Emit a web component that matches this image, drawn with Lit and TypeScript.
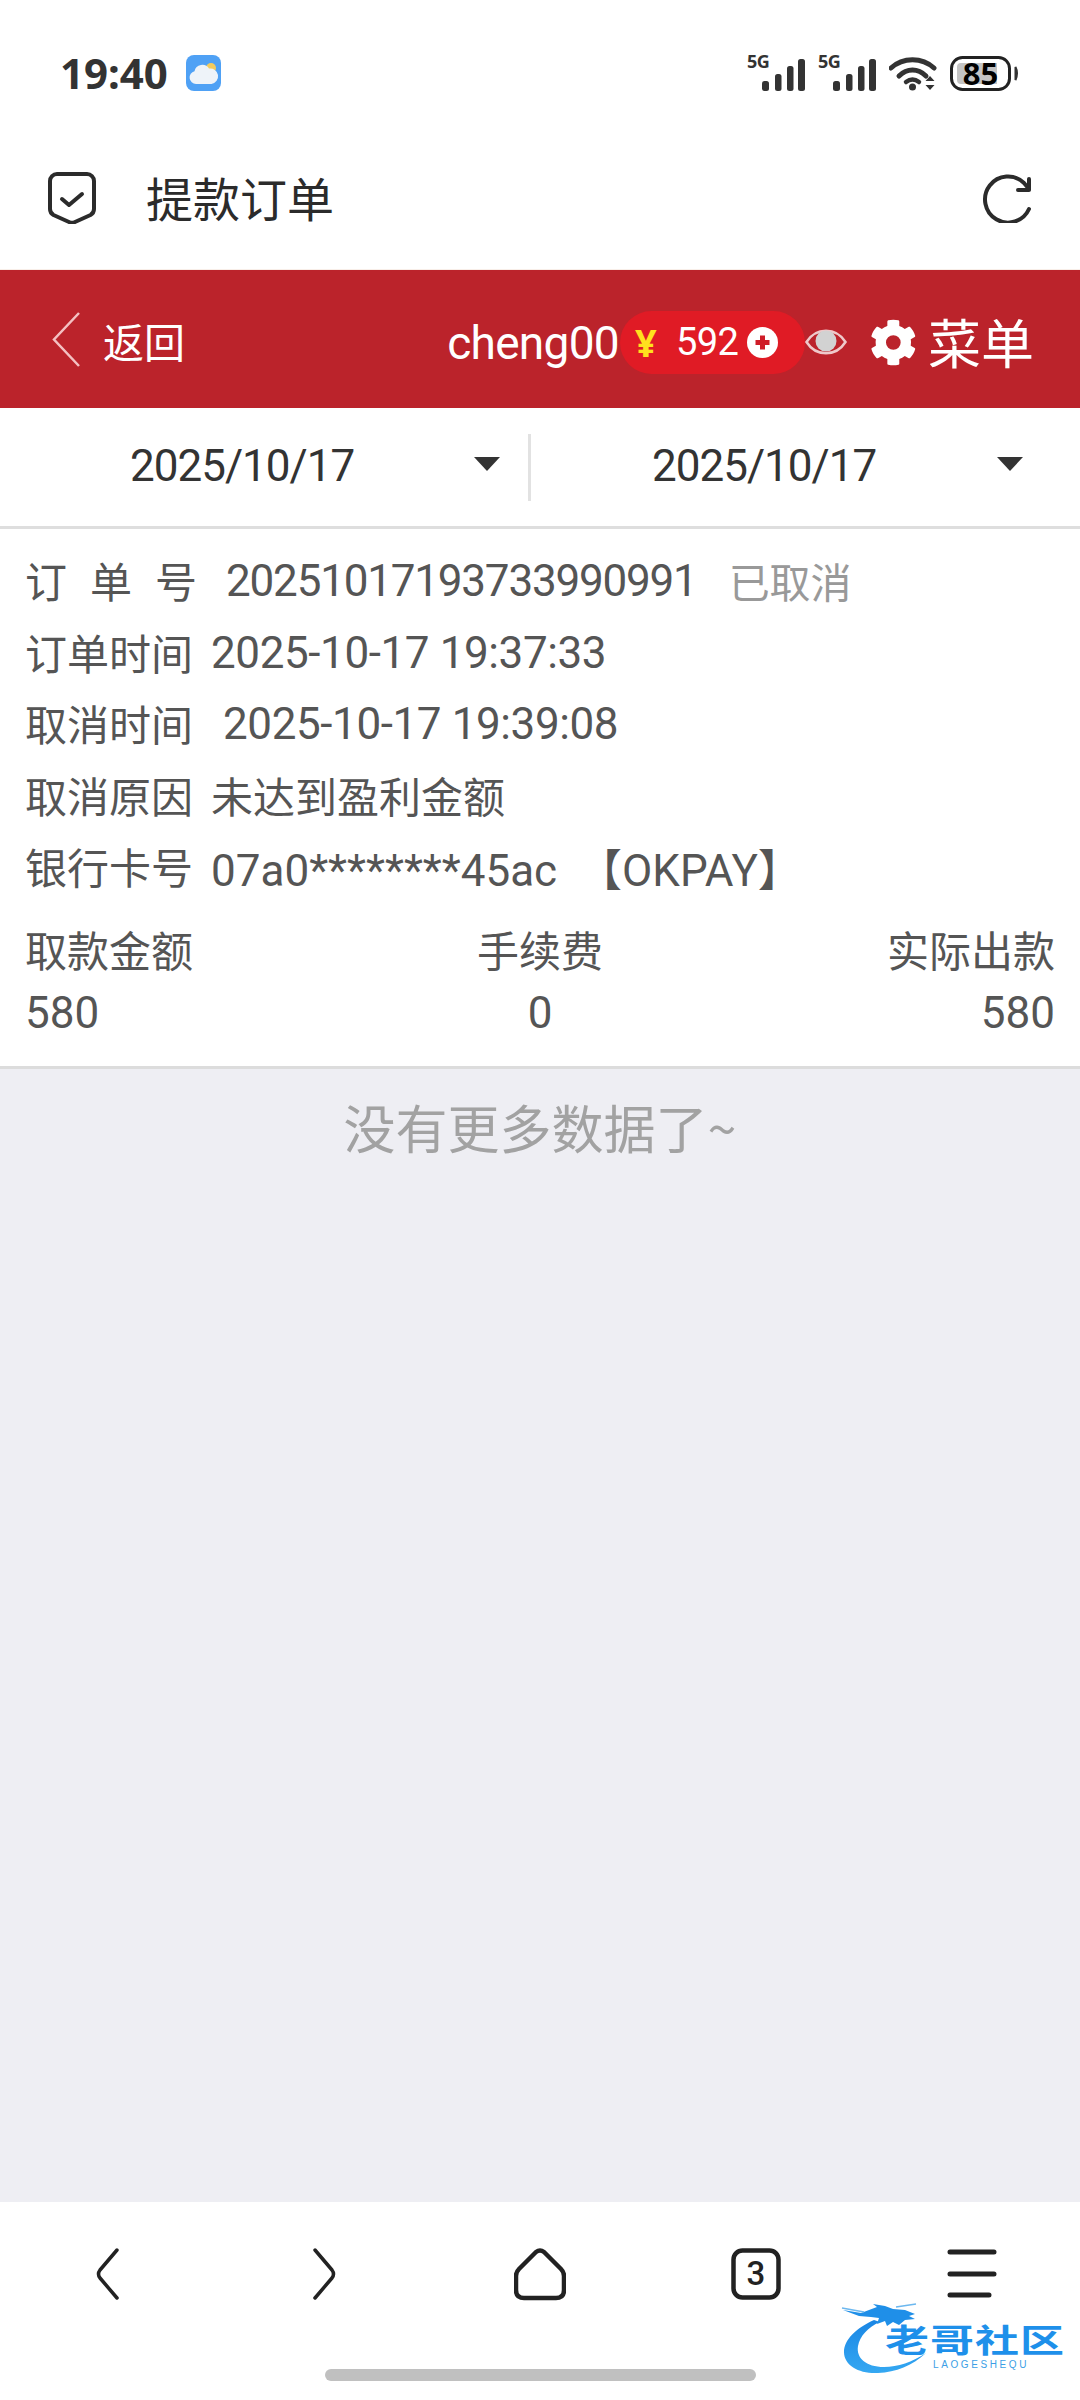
import { LitElement, html, css, svg } from "lit";
import { customElement } from "lit/decorators.js";

const signal = html`<svg class="sig" width="58" height="38" viewBox="0 0 58 38">
  <text x="0" y="14" class="five">5G</text>
  <g fill="#333">
    <rect x="15" y="27" width="7" height="10" rx="2.5"/>
    <rect x="28" y="20" width="6.5" height="17" rx="2.5"/>
    <rect x="40" y="12" width="6.5" height="25" rx="2.5"/>
    <rect x="51" y="5" width="7" height="32" rx="2.5"/>
  </g></svg>`;

@customElement("app-root")
export class AppRoot extends LitElement {
  static styles = css`
    :host { display: flex; flex-direction: column; width: 1080px; height: 2400px; position: relative; overflow: hidden;
      background: #fff; font-family: Roboto, "Noto Sans CJK SC", sans-serif; color: #555; }
    svg { display: block; flex: none; }
    .status { height: 126px; box-sizing: border-box; padding: 54px 61px 0 60px; display: flex; align-items: flex-start; justify-content: space-between; flex: none; }
    .status-left { display: flex; align-items: center; gap: 18px; height: 38px; }
    .time { font: 700 42px/38px "Noto Sans", "Open Sans", sans-serif; color: #333; }
    .status-right { display: flex; align-items: center; gap: 13px; height: 38px; }
    .sig { overflow: visible; }
    .five { font: 700 18px "Noto Sans", sans-serif; fill: #333; letter-spacing: -0.5px; }
    .batt { position: relative; width: 69px; height: 35px; }
    .batt-num { position: absolute; left: 0; width: 61px; top: 0; text-align: center; font: 700 31px/35px "Noto Sans", sans-serif; color: #000; }
    .titlebar { height: 144px; box-sizing: border-box; padding: 0 48px; display: flex; align-items: center; flex: none; border-bottom: 1px solid #f8eee8; }
    .titlebar h1 { margin: 0 0 2px 50px; font: 400 47px/60px "Noto Sans CJK SC", sans-serif; color: #2b2b2b; flex: 1; }
    .redbar { height: 138px; background: #bb232b; color: #fff; display: flex; align-items: center; padding: 6px 46px 0 52px; flex: none; box-sizing: border-box; }
    .chev { margin-top: -6px; }
    .back { font: 400 41px/48px "Noto Sans CJK SC", sans-serif; margin-left: 23px; flex: 1; margin-top: -4px; }
    .user { font: 400 46px/50px Roboto, sans-serif; letter-spacing: -0.7px; margin-top: 2px; }
    .pill { width: 185px; height: 63px; border-radius: 32px; background: #e01b25; display: flex; align-items: center; box-sizing: border-box; padding-left: 15px; margin-left: 1px; }
    .yen { font: 700 38px/40px "Noto Sans", sans-serif; color: #ffe11e; width: 41px; }
    .amount { font: 400 38px/44px Roboto, sans-serif; width: 71px; letter-spacing: -0.6px; }
    .gear { margin-left: 23px; }
    .menu { font: 400 53px/60px "Noto Sans CJK SC", sans-serif; margin-left: 11px; margin-top: -3px; }
    .dates { height: 121px; box-sizing: border-box; border-bottom: 3px solid #dedede; display: flex; align-items: center; flex: none; }
    .date { display: flex; align-items: center; height: 100%; }
    .date span { font: 400 44px/54px Roboto, sans-serif; color: #333; letter-spacing: -1px; margin-bottom: 2px; }
    .d1 { padding-left: 130px; width: 528px; box-sizing: border-box; flex: none; }
    .d2 { padding-left: 121px; flex: 1; }
    .arrow { width: 0; height: 0; border-left: 13px solid transparent; border-right: 13px solid transparent; border-top: 14px solid #333; margin-bottom: 6px; }
    .d1 .arrow { margin-left: 120px; }
    .d2 .arrow { margin-left: 121px; }
    .divider { width: 3px; height: 67px; background: #e2e2e2; flex: none; }
    .card { background: #fff; padding: 16px 25px 0; height: 540px; box-sizing: border-box; border-bottom: 3px solid #dcdcdc; flex: none; }
    .row { display: flex; align-items: center; height: 71.5px; font-size: 42px; gap: 18px; white-space: nowrap; }
    .row.wide { gap: 30px; }
    .cjk { margin-bottom: 2px; }
    .num { font-size: 44px; letter-spacing: -0.4px; margin-bottom: -1px; }
    .id { font-size: 44px; letter-spacing: -1.2px; margin-left: -1px; margin-bottom: -1px; }
    .bank { font-size: 44px; word-spacing: 10px; margin-bottom: -1px; }
    .spaced { word-spacing: 12.6px; }
    .row .st { color: #999; margin-left: 2px; font-size: 41px; }
    .table { display: grid; grid-template-columns: 1fr 1fr 1fr; margin-top: 20px; font-size: 42px; row-gap: 0; }
    .table div { height: 60px; line-height: 60px; }
    .table .v { font-size: 44px; }
    .c { text-align: center; }
    .r { text-align: right; }
    .main { flex: 1; background: #eeeef3; display: flex; justify-content: center; }
    .nomore { margin-top: 29px; font: 400 52px/58px "Noto Sans CJK SC", sans-serif; color: #a2a2a2; }
    .nav { height: 198px; box-sizing: border-box; padding-top: 46px; flex: none; background: #fff; display: flex; flex-direction: column; align-items: center; }
    .nav-icons { display: grid; grid-template-columns: repeat(5, 216px); justify-items: center; height: 54px; }
    .tab { position: relative; width: 50px; height: 52px; }
    .tab b { position: absolute; inset: 0; text-align: center; font: 500 33px/52px Roboto, sans-serif; color: #222; }
    .handle { width: 431px; height: 12px; border-radius: 6px; background: #c0c0c0; margin-top: 67px; }
    .mark { position: absolute; left: 840px; top: 2302px; width: 232px; height: 76px; }
    .mark-cn { position: absolute; left: 45px; top: 20px; font: 700 44px/44px "Noto Sans CJK SC", sans-serif; color: #1e90ea; white-space: nowrap; letter-spacing: 1px; transform: scaleY(0.72); transform-origin: 0 0; }
    .mark-en { position: absolute; left: 93px; top: 57px; font: 400 10px/12px "Liberation Sans", sans-serif; letter-spacing: 2.6px; color: #3c9fe6; white-space: nowrap; }
  `;

  render() {
    return html`
      <div class="status">
        <div class="status-left">
          <span class="time">19:40</span>
          <svg width="35" height="36" viewBox="0 0 35 36">
            <rect width="35" height="36" rx="8" fill="#4fa1f5"/>
            <circle cx="25" cy="13" r="5" fill="#f3cb5e"/>
            <path d="M10 29a6.5 6.5 0 0 1-1.5-12.8A8 8 0 0 1 23 13.5a7.6 7.6 0 0 1 2.5 15.5z" fill="#eef3f9"/>
          </svg>
        </div>
        <div class="status-right">
          ${signal}${signal}
          <svg width="48" height="36" viewBox="0 0 48 36" fill="none" stroke="#333" stroke-linecap="round">
            <path d="M2 13C14 2 33 2 45 13" stroke-width="5"/>
            <path d="M10 21C18 13 29 13 37 21" stroke-width="5"/>
            <path d="M17 27C21 24 26 24 30 27" stroke-width="4.5"/>
            <circle cx="23.5" cy="32" r="3.5" fill="#333" stroke="none"/>
            <path d="M41 21l4.5 5h-9zM41 35l-4.5-5h9z" fill="#333" stroke="none"/>
          </svg>
          <div class="batt">
            <svg width="69" height="35" viewBox="0 0 69 35">
              <rect x="1.5" y="1.5" width="58" height="32" rx="11" fill="#fff" stroke="#222" stroke-width="3"/>
              <path d="M11 7h36v21H11a4 4 0 0 1-4-4V11a4 4 0 0 1 4-4z" fill="#c4c4c4"/>
              <path d="M65.500 11q3 6 0 13z" fill="#333" stroke="#333" stroke-width="2"/>
            </svg>
            <span class="batt-num">85</span>
          </div>
        </div>
      </div>

      <div class="titlebar">
        <svg width="48" height="52" viewBox="0 0 48 52" fill="none" stroke="#2b2b2b" stroke-width="4" stroke-linejoin="round" stroke-linecap="round">
          <path d="M9 2h30a7 7 0 0 1 7 7v28q0 4-3.500 6L27 50q-3 1.500-6 0L5.500 43Q2 41 2 37V9a7 7 0 0 1 7-7z"/>
          <path d="M14 27l7 6 13-11"/>
        </svg>
        <h1>提款订单</h1>
        <svg width="50" height="50" viewBox="0 0 50 50" fill="none" stroke="#2b2b2b" stroke-width="4" stroke-linecap="round" stroke-linejoin="round">
          <path d="M47 36A23 23 0 1 1 42 10l5 6"/>
          <path d="M47 6v11H36"/>
        </svg>
      </div>

      <div class="redbar">
        <svg class="chev" width="28" height="55" viewBox="0 0 28 55" fill="none" stroke="#f4c0c2" stroke-width="2.500"><path d="M27 1L2 27.500 27 54"/></svg>
        <span class="back">返回</span>
        <span class="user">cheng00</span>
        <div class="pill">
          <span class="yen">¥</span>
          <span class="amount">592</span>
          <svg width="31" height="31" viewBox="0 0 31 31">
            <circle cx="15.500" cy="15.500" r="15.500" fill="#fff"/>
            <path d="M15.500 8.500v14M8.500 15.500h14" stroke="#cf1c28" stroke-width="5"/>
          </svg>
        </div>
        <svg width="42" height="32" viewBox="0 0 42 32" fill="none">
          <path d="M1.500 16C11 1 31 1 40.500 16 31 31 11 31 1.500 16z" stroke="#efc9ca" stroke-width="2.500"/>
          <circle cx="21" cy="15" r="10.500" fill="#d2d2d2"/>
        </svg>
        <svg class="gear" width="47" height="47" viewBox="0 0 512 512"><path fill="#fff" fill-rule="evenodd" d="M487 316l-43-25a192 192 0 0 0 0-70l43-25c5-3 7-9 5-14-11-36-30-68-55-95-4-4-10-5-15-2l-43 25a188 188 0 0 0-60-35V26c0-6-4-10-9-12-37-8-76-8-112 0-5 2-9 6-9 12v49a188 188 0 0 0-60 35L86 85c-5-3-11-2-15 2-25 27-44 59-55 95-2 5 0 11 5 14l43 25a192 192 0 0 0 0 70l-43 25c-5 3-7 9-5 14 11 36 30 68 55 95 4 4 10 5 15 2l43-25a188 188 0 0 0 60 35v50c0 5 4 10 9 11 37 8 76 8 112 0 5-1 9-6 9-11v-50a188 188 0 0 0 60-35l43 25c5 3 11 2 15-2 25-27 44-59 55-95 2-5 0-11-5-14zM254 336a80 80 0 1 1 0-160 80 80 0 0 1 0 160z"/></svg>
        <span class="menu">菜单</span>
      </div>

      <div class="dates">
        <div class="date d1"><span>2025/10/17</span><i class="arrow"></i></div>
        <div class="divider"></div>
        <div class="date d2"><span>2025/10/17</span><i class="arrow"></i></div>
      </div>

      <div class="card">
        <div class="row wide"><span class="spaced cjk">订 单 号</span><span class="id">20251017193733990991</span><span class="st cjk">已取消</span></div>
        <div class="row"><span class="cjk">订单时间</span><span class="num">2025-10-17 19:37:33</span></div>
        <div class="row wide"><span class="cjk">取消时间</span><span class="num">2025-10-17 19:39:08</span></div>
        <div class="row"><span class="cjk">取消原因</span><span class="cjk">未达到盈利金额</span></div>
        <div class="row"><span class="cjk">银行卡号</span><span class="bank">07a0********45ac 【OKPAY】</span></div>
        <div class="table">
          <div>取款金额</div><div class="c">手续费</div><div class="r">实际出款</div>
          <div class="v">580</div><div class="c v">0</div><div class="r v">580</div>
        </div>
      </div>

      <div class="main"><div class="nomore">没有更多数据了~</div></div>

      <div class="nav">
        <div class="nav-icons">
          <svg width="24" height="52" viewBox="0 0 24 52" fill="none" stroke="#222" stroke-width="3.500" stroke-linecap="round" stroke-linejoin="round"><path d="M21 2L4 22q-3 4 0 8l17 20"/></svg>
          <svg width="24" height="52" viewBox="0 0 24 52" fill="none" stroke="#222" stroke-width="3.500" stroke-linecap="round" stroke-linejoin="round"><path d="M3 2l17 20q3 4 0 8L3 50"/></svg>
          <svg width="52" height="53" viewBox="0 0 52 53" fill="none" stroke="#222" stroke-width="4.500" stroke-linejoin="round"><path d="M22 4q4-3 8 0l17 17q3 3 3 7v14q0 8-8 8H10q-8 0-8-8V28q0-4 3-7z"/></svg>
          <div class="tab">
            <svg width="50" height="52" viewBox="0 0 50 52" fill="none" stroke="#222" stroke-width="4.500"><rect x="2.500" y="2.500" width="45" height="47" rx="9"/></svg>
            <b>3</b>
          </div>
          <svg width="50" height="50" viewBox="0 0 50 50" stroke="#222" stroke-width="5" stroke-linecap="round"><path d="M3 4h44M3 26h44M3 47h39"/></svg>
        </div>
        <div class="handle"></div>
      </div>

      <div class="mark">
        <svg width="232" height="76" viewBox="0 0 232 76">
          <defs><linearGradient id="g" x1="0" y1="0" x2="0" y2="1"><stop offset="0" stop-color="#1a86e4"/><stop offset="1" stop-color="#35a8f2"/></linearGradient></defs>
          <path fill="url(#g)" d="M34 18C16 26 4 38 4 50c0 14 16 22 34 21 18-1 34-7 48-20-14 9-28 14-42 14C26 65 16 56 18 44c2-10 10-19 22-24z"/>
          <path fill="#1f8fe8" d="M3 8l18 3 16-6-4-3 12 2 8 3 12 1 10 4-6 2 6 3-10 1-6 5-6-3-6 4-2-5-8 3 2-6-8-1-12-1z"/>
          ${svg`<path d="M24 10L2 6M56 5l20-3" stroke="#6db8ef" stroke-width="1.500" fill="none"/>`}
        </svg>
        <span class="mark-cn">老哥社区</span>
        <span class="mark-en">LAOGESHEQU</span>
      </div>
    `;
  }
}
